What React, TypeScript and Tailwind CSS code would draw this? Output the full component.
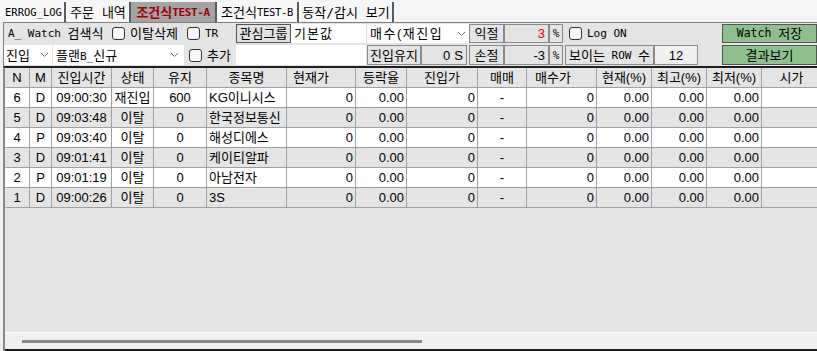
import React from 'react';

const cols = [
  { h: 'N', w: 'w-[25px]', a: 'justify-center', ha: 'justify-center' },
  { h: 'M', w: 'w-[22px]', a: 'justify-center', ha: 'justify-center' },
  { h: '진입시간', w: 'w-[60px]', a: 'justify-center', ha: 'justify-center' },
  { h: '상태', w: 'w-[42px]', a: 'justify-center', ha: 'justify-center' },
  { h: '유지', w: 'w-[53px]', a: 'justify-center', ha: 'justify-center' },
  { h: '종목명', w: 'w-[80px]', a: 'justify-start pl-[2px]', ha: 'justify-center' },
  { h: '현재가', w: 'w-[69px]', a: 'justify-end pr-[2px]', ha: 'justify-start pl-[6px]' },
  { h: '등락율', w: 'w-[51px]', a: 'justify-end pr-[2px]', ha: 'justify-center' },
  { h: '진입가', w: 'w-[71px]', a: 'justify-end pr-[2px]', ha: 'justify-center' },
  { h: '매매', w: 'w-[49px]', a: 'justify-center', ha: 'justify-center' },
  { h: '매수가', w: 'w-[70px]', a: 'justify-end pr-[2px]', ha: 'justify-start pl-[8px]' },
  { h: '현재(%)', w: 'w-[55px]', a: 'justify-end pr-[2px]', ha: 'justify-center' },
  { h: '최고(%)', w: 'w-[55px]', a: 'justify-end pr-[2px]', ha: 'justify-center' },
  { h: '최저(%)', w: 'w-[55px]', a: 'justify-end pr-[2px]', ha: 'justify-center' },
  { h: '시가', w: 'w-[60px]', a: 'justify-end pr-[2px]', ha: 'justify-center' },
];

const rows = [
  ['6', 'D', '09:00:30', '재진입', '600', 'KG이니시스'],
  ['5', 'D', '09:03:48', '이탈', '0', '한국정보통신'],
  ['4', 'P', '09:03:40', '이탈', '0', '해성디에스'],
  ['3', 'D', '09:01:41', '이탈', '0', '케이티알파'],
  ['2', 'P', '09:01:19', '이탈', '0', '아남전자'],
  ['1', 'D', '09:00:26', '이탈', '0', '3S'],
];

function Check() {
  return <span className="inline-block w-[13px] h-[13px] rounded-[3px] border border-[#333] bg-[#f8f8f8] shrink-0" />;
}

function Chevron() {
  return (
    <svg width="9" height="6" viewBox="0 0 9 6" className="shrink-0">
      <path d="M1 1 L4.5 4.5 L8 1" fill="none" stroke="#707070" strokeWidth="1" />
    </svg>
  );
}

function Box({ w, children, cls = '' }: { w: string; children?: React.ReactNode; cls?: string }) {
  return (
    <div className={`${w} h-full flex items-center border border-[#8a8a8a] bg-[#e4e4e4] whitespace-pre ${cls}`}>{children}</div>
  );
}

export default function App() {
  return (
    <div className="w-[817px] h-[351px] overflow-hidden bg-[#f0f0f0] text-[13px] text-black font-['DejaVu_Sans_Mono','Noto_Sans_CJK_KR',monospace] leading-none">
      {/* Tabs */}
      <div className="h-[22px] bg-[#f4f5f7] flex items-end pl-[3px] whitespace-pre">
        <div className="w-[63px] h-[20px] flex items-center justify-center bg-[#f6f6f6] border-r-2 border-[#5a5a5a] text-[10.5px]">ERROG_LOG</div>
        <div className="w-[65px] h-[20px] flex items-center justify-center bg-[#f6f6f6] border-l border-white border-r-2 border-r-[#5a5a5a]">주문 내역</div>
        <div className="w-[86px] h-[20px] flex items-center justify-center bg-[#a4a4a4] text-[#a00000] font-bold border-r-2 border-[#5a5a5a]">조건식<span className="text-[11px] tracking-[-0.4px]">TEST-A</span></div>
        <div className="w-[82px] h-[20px] flex items-center justify-center bg-[#f6f6f6] border-r-2 border-[#5a5a5a]">조건식<span className="text-[10.5px] tracking-[-0.3px]">TEST-B</span></div>
        <div className="w-[95px] h-[20px] flex items-center justify-center bg-[#f6f6f6] border-l border-white border-r-2 border-r-[#5a5a5a]">동작/감시 보기</div>
      </div>

      {/* Control panel */}
      <div className="ml-[3px] h-[44px] border-t border-l border-[#808080] bg-[#e4e4e4] pt-[1px] whitespace-pre">
        <div className="h-[19px] flex items-stretch">
          <div className="w-[106px] pl-[4px] flex items-center"><span className="text-[11px]">A_ Watch </span>검색식</div>
          <div className="w-[75px] flex items-center gap-[5px] pl-[2px]"><Check />이탈삭제</div>
          <div className="w-[51px] flex items-center gap-[5px] pl-[2px] text-[11px]"><Check />TR</div>
          <div className="w-[55px] flex items-center justify-center border border-[#555] bg-[#e1e1e1]">관심그룹</div>
          <div className="w-[75px] flex items-center pl-[3px] bg-white tracking-[1px]">기본값</div>
          <div className="w-[103px] flex items-center justify-between pl-[3px] pr-[3px] bg-white border-l border-[#ddd] overflow-hidden">
            <span className="tracking-[1.5px]">매수<span className="font-['Liberation_Sans',sans-serif]">(</span>재진입</span>
            <Chevron />
          </div>
          <Box w="w-[35px]" cls="justify-center">익절</Box>
          <Box w="w-[45px]" cls="justify-end pr-[3px] text-[#e00000] font-['Liberation_Sans',sans-serif]">3</Box>
          <Box w="w-[14px]" cls="justify-center text-[11px]">%</Box>
          <div className="flex items-center gap-[5px] pl-[6px] text-[11px]"><Check />Log ON</div>
          <div className="flex-1" />
          <div className="w-[95px] flex items-center justify-center border border-[#555] bg-[#8fbf8f]"><span className="text-[11.5px]">Watch </span>저장</div>
        </div>
        <div className="h-[20px] mt-[2px] flex items-stretch">
          <div className="w-[48px] flex items-center justify-between pl-[2px] pr-[3px] bg-white">진입<Chevron /></div>
          <div className="w-[131px] ml-[1px] flex items-center justify-between pl-[3px] pr-[5px] bg-white">
            <span>플랜<span className="text-[11px]">B_</span>신규</span>
            <Chevron />
          </div>
          <div className="w-[52px] flex items-center gap-[5px] pl-[5px]"><Check />추가</div>
          <div className="w-[130px] bg-white" />
          <Box w="w-[54px] ml-[1px]" cls="justify-center">진입유지</Box>
          <Box w="w-[46px]" cls="justify-end pr-[3px] font-['Liberation_Sans',sans-serif] gap-[4px]">0<span>S</span></Box>
          <Box w="w-[35px] ml-[2px]" cls="justify-center">손절</Box>
          <Box w="w-[45px]" cls="justify-end pr-[3px] font-['Liberation_Sans',sans-serif]">-3</Box>
          <Box w="w-[14px]" cls="justify-center text-[11px]">%</Box>
          <Box w="w-[89px] ml-[2px]" cls="justify-center">보이는<span className="text-[11px]"> ROW </span>수</Box>
          <Box w="w-[44px]" cls="justify-center bg-[#f0f0f0] font-['Liberation_Sans',sans-serif]">12</Box>
          <div className="flex-1" />
          <div className="w-[95px] flex items-center justify-center border border-[#555] bg-[#8fbf8f]">결과보기</div>
        </div>
      </div>

      {/* Grid */}
      <div className="ml-[3px] border-t-2 border-[#1e1e1e] border-l-2 border-l-[#8a8a8a] h-[285px] flex flex-col bg-[#e4e4e4] font-['Liberation_Sans','Noto_Sans_CJK_KR',sans-serif]">
        <div className="flex h-[20px] bg-[#e4e4e4] shrink-0">
          {cols.map((c) => (
            <div key={c.h} className={`${c.w} shrink-0 flex items-center ${c.ha} border-r border-b border-[#a0a0a0]`}>
              {c.h}
            </div>
          ))}
        </div>
        {rows.map((r, i) => {
          const vals = [...r, '0', '0.00', '0', '-', '0', '0.00', '0.00', '0.00', ''];
          return (
            <div key={r[0]} className={`flex h-[20px] shrink-0 ${i % 2 === 0 ? 'bg-white' : 'bg-[#e4e4e4]'}`}>
              {cols.map((c, j) => (
                <div key={c.h} className={`${c.w} shrink-0 flex items-center ${c.a} border-r border-b border-[#a0a0a0]`}>
                  {vals[j]}
                </div>
              ))}
            </div>
          );
        })}
        <div className="flex-1" />
        <div className="h-[17px] bg-[#f0f0f0] border-t border-white flex items-center pl-[17px] shrink-0">
          <div className="w-[400px] h-[3px] bg-[#888]" />
        </div>
        <div className="h-[2px] bg-[#1e1e1e] shrink-0" />
      </div>
    </div>
  );
}
